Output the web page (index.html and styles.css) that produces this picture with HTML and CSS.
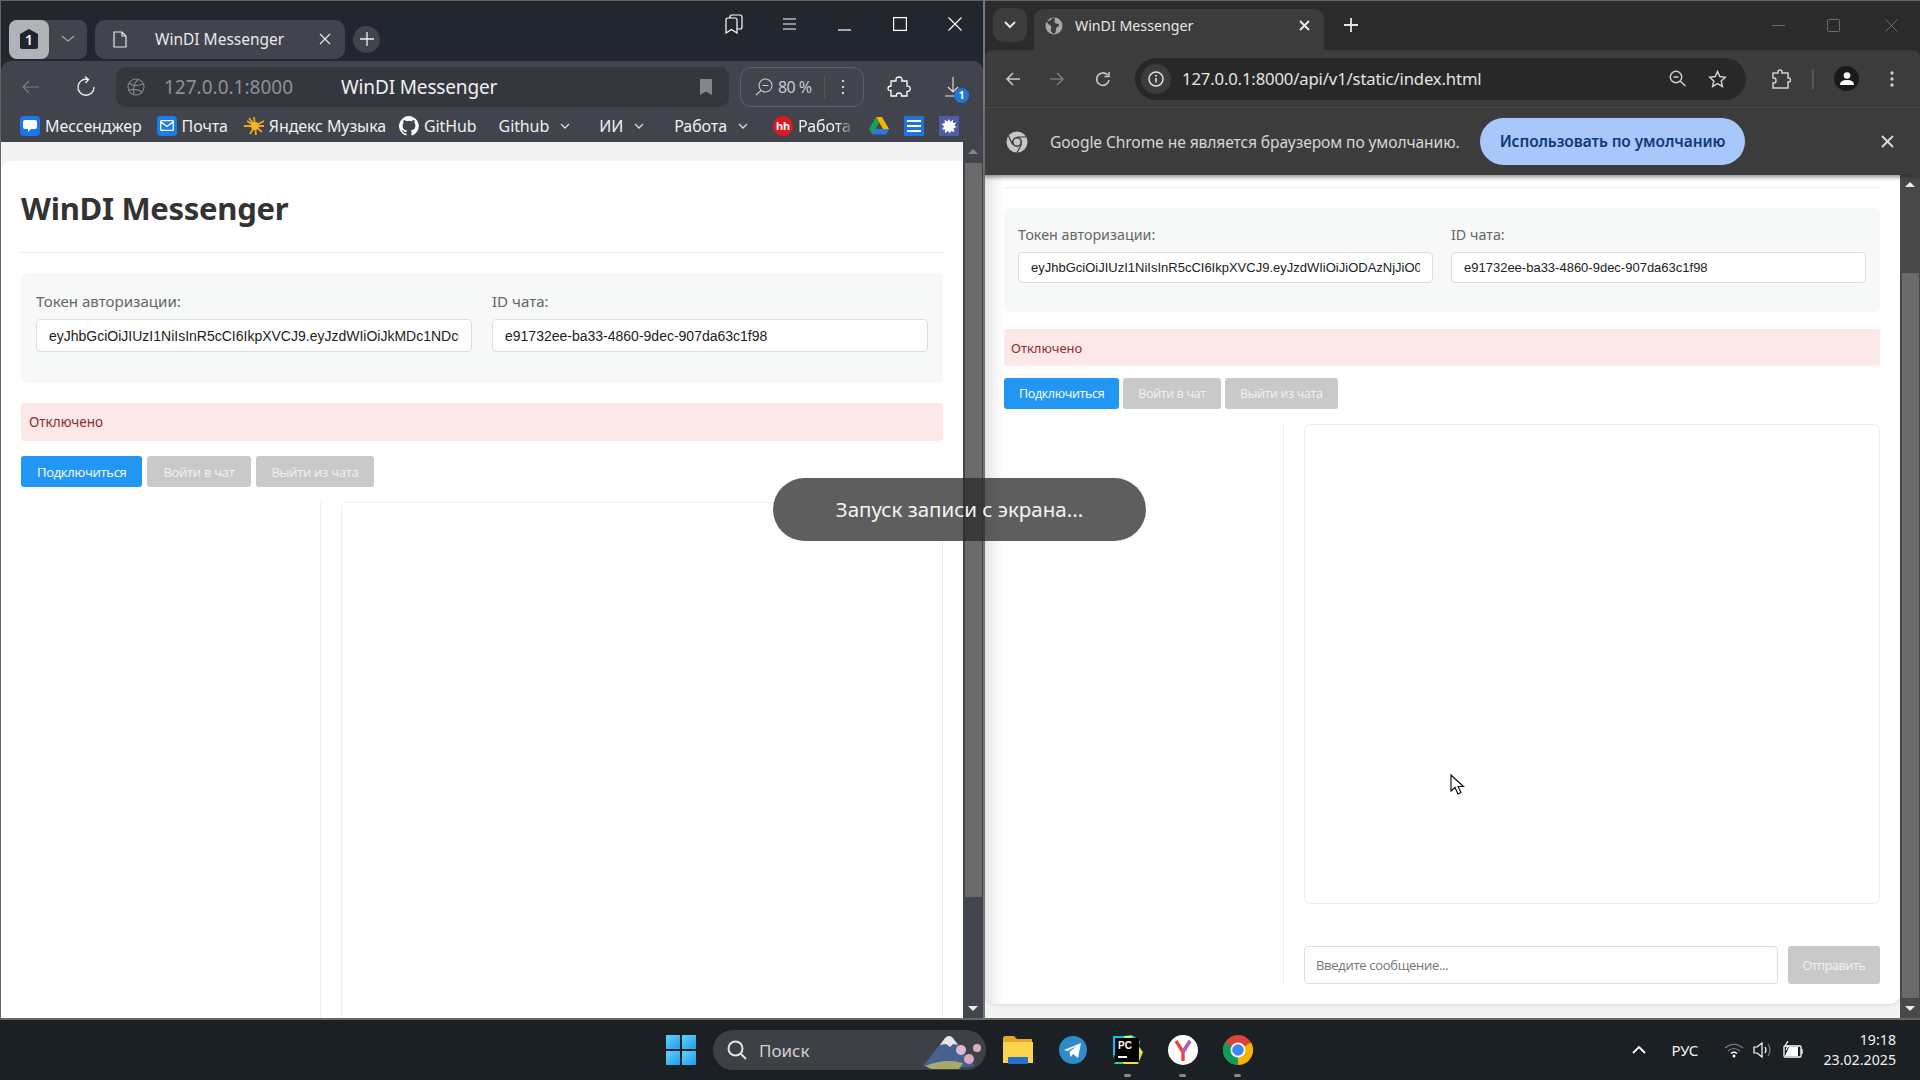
FILE: index.html
```html
<!DOCTYPE html>
<html lang="ru">
<head>
    <meta charset="UTF-8">
    <title>WinDI Messenger</title>
    <link rel="stylesheet" href="styles.css">
</head>
<body>
    <div class="desktop">
        <!-- left window: yandex -->
        <section class="win win-left">
            <div class="y-tabs">
                <div class="y-count"><span class="y-count-num"><svg class="y-hex" viewBox="0 0 22 22"><path d="M11 1l9 5v13a2 2 0 0 1-2 2H4a2 2 0 0 1-2-2V6z" fill="#20242c"/></svg><b>1</b></span><span class="y-count-arrow"><svg width="14" height="8" viewBox="0 0 14 8"><path d="M1 1l6 5 6-5" fill="none" stroke="#9a9ca3" stroke-width="1.5"/></svg></span></div>
                <div class="y-tab">
                    <svg width="14" height="17" viewBox="0 0 14 17"><path d="M1 1h8l4 4v11H1zM9 1v4h4" fill="none" stroke="#e8e8ea" stroke-width="1.2"/></svg>
                    <span class="y-tab-title">WinDI Messenger</span>
                    <svg width="12" height="12" viewBox="0 0 12 12"><path d="M1 1l10 10M11 1L1 11" stroke="#e8e8ea" stroke-width="1.2"/></svg>
                </div>
                <div class="y-new"><svg width="14" height="14" viewBox="0 0 14 14"><path d="M7 0v14M0 7h14" stroke="#f0f0f0" stroke-width="1.3"/></svg></div>
                <div class="y-sys">
                    <svg class="y-sys-book" width="18" height="20" viewBox="0 0 18 20"><path d="M1 6q0-2 2-2h7q2 0 2 2v13l-5.500-3.500L1 19zM5 4V3q0-2 2-2h8q2 0 2 2v10q0 2-2 2h-3" fill="none" stroke="#fff" stroke-width="1.200"/></svg>
                    <svg class="y-sys-menu" width="14" height="12" viewBox="0 0 14 12"><path d="M0 1h13M0 6h13M0 11h13" stroke="#fff" stroke-width="1.200"/></svg>
                    <svg class="y-sys-min" width="14" height="14" viewBox="0 0 14 14"><path d="M0 13h13" stroke="#fff" stroke-width="1.200"/></svg>
                    <svg class="y-sys-max" width="14" height="14" viewBox="0 0 14 14"><path d="M.6.6h12.800v12.800H.6z" fill="none" stroke="#fff" stroke-width="1.200"/></svg>
                    <svg class="y-sys-close" width="14" height="14" viewBox="0 0 14 14"><path d="M.5.5l13 13M13.500.5l-13 13" stroke="#fff" stroke-width="1.100"/></svg>
                </div>
            </div>
            <div class="y-panel">
                <div class="y-toolbar">
                    <svg class="y-back" width="18" height="14" viewBox="0 0 18 14"><path d="M17 7H1M7 1L1 7l6 6" fill="none" stroke="#7c7e85" stroke-width="1.200"/></svg>
                    <svg class="y-reload" width="20" height="21" viewBox="0 0 20 21"><path d="M12 3.500A8 8 0 1 0 18 11M9 .5l3.500 3L9.500 7" fill="none" stroke="#eee" stroke-width="1.300"/></svg>
                    <div class="y-address">
                        <svg width="18" height="18" viewBox="0 0 18 18"><g fill="none" stroke="#85878d" stroke-width="1.100"><circle cx="9" cy="9" r="8"/><path d="M2 5c4 3 9 3 14 1M1.500 12c5-1 10-1 13 2M11 1.500C7 5 6 11 7 16.500"/></g></svg>
                        <span class="y-host">127.0.0.1:8000</span>
                        <span class="y-title">WinDI Messenger</span>
                        <svg class="y-mark" width="14" height="18" viewBox="0 0 14 18"><path d="M1 2q0-1 1-1h10q1 0 1 1v15l-6-3.500L1 17z" fill="#84868c"/></svg>
                    </div>
                    <div class="y-zoom">
                        <svg width="18" height="18" viewBox="0 0 18 18"><g fill="none" stroke="#c9cacd" stroke-width="1.100"><circle cx="10.500" cy="7.500" r="6.500"/><path d="M7.500 7.500h6M6 12.500L1 17"/></g></svg>
                        <span class="y-zoom-val">80 %</span>
                        <span class="y-zoom-sep"></span>
                        <svg width="4" height="16" viewBox="0 0 4 16"><g fill="#d0d0d3"><circle cx="2" cy="2" r="1.200"/><circle cx="2" cy="8" r="1.200"/><circle cx="2" cy="14" r="1.200"/></g></svg>
                    </div>
                    <svg class="y-ext" width="24" height="22" viewBox="0 0 24 22"><path d="M9 4.500Q8.500 1 12 1t3 3.500L14.800 5H20v5.200q3-.7 3.200 2.300T20 15.500V20h-5.500q.5-3-2.500-3t-2.500 3H4v-5.500Q1 15 1 12.500T4 10V5h5z" fill="none" stroke="#fff" stroke-width="1.300"/></svg>
                    <div class="y-down">
                        <svg width="16" height="20" viewBox="0 0 16 20"><path d="M8 0v15M3 10l5 5 5-5M0 19h14" fill="none" stroke="#e8e8e8" stroke-width="1.100"/></svg>
                        <span class="y-badge">1</span>
                    </div>
                </div>
                <div class="y-marks">
                    <span class="bm"><i class="ic ic-msg"><svg width="14" height="12" viewBox="0 0 14 12"><path d="M2 0h10q2 0 2 2v5q0 2-2 2H8l-3 3V9H2Q0 9 0 7V2q0-2 2-2z" fill="#fff"/></svg></i>Мессенджер</span>
                    <span class="bm bm-mail"><i class="ic ic-mail"><svg width="14" height="11" viewBox="0 0 14 11"><path d="M1.500.7h11q.8 0 .8.8v8q0 .8-.8.8h-11q-.8 0-.8-.8v-8q0-.8.8-.8zM1 2l6 4.500L13 2" fill="none" stroke="#fff" stroke-width="1.300"/></svg></i>Почта</span>
                    <span class="bm bm-music"><svg class="ic-sun" width="22" height="20" viewBox="0 0 22 20"><path d="M12 10L21 5M12 10l-1-9M12 10L6 2M12 10l9 0M12 10l7 6M12 10l1 9M12 10l-5 8M12 10L1 10M12 10L4 5" stroke="#e6ac1e" stroke-width="1.800"/><circle cx="12" cy="10" r="4" fill="#f0b71f"/></svg>Яндекс Музыка</span>
                    <span class="bm bm-git"><svg width="20" height="20" viewBox="0 0 16 16"><path fill="#fff" d="M8 0a8 8 0 0 0-2.500 15.600c.4.100.5-.2.5-.4v-1.400c-2.200.5-2.700-1-2.700-1-.4-.9-.9-1.200-.9-1.200-.7-.5.100-.5.100-.5.800.1 1.200.8 1.200.8.700 1.200 1.900.9 2.300.7.100-.5.300-.9.500-1.100-1.800-.2-3.600-.9-3.600-4 0-.9.300-1.600.8-2.100-.1-.2-.4-1 .1-2.100 0 0 .7-.2 2.200.8a7.500 7.500 0 0 1 4 0c1.500-1 2.200-.8 2.200-.8.400 1.100.2 1.900.1 2.100.5.600.8 1.300.8 2.100 0 3.100-1.900 3.700-3.700 3.900.3.300.6.800.6 1.500v2.200c0 .2.100.5.600.4A8 8 0 0 0 8 0z"/></svg>GitHub</span>
                    <span class="bm bm-fold bm-f1">Github<svg class="chev" width="10" height="6" viewBox="0 0 10 6"><path d="M1 1l4 4 4-4" fill="none" stroke="#ddd" stroke-width="1.300"/></svg></span>
                    <span class="bm bm-fold bm-f2">ИИ<svg class="chev" width="10" height="6" viewBox="0 0 10 6"><path d="M1 1l4 4 4-4" fill="none" stroke="#ddd" stroke-width="1.300"/></svg></span>
                    <span class="bm bm-fold bm-f3">Работа<svg class="chev" width="10" height="6" viewBox="0 0 10 6"><path d="M1 1l4 4 4-4" fill="none" stroke="#ddd" stroke-width="1.300"/></svg></span>
                    <span class="bm bm-hh"><i class="ic ic-hh">hh</i><span class="bm-fade">Работа</span></span>
                    <svg class="bm-drive" width="20" height="18" viewBox="0 0 20 18"><path d="M7 0h6l7 12h-6z" fill="#f4b400"/><path d="M7 0l3 6-6.500 11.500L0 12z" fill="#1b9e55"/><path d="M6 12h14l-3 5.500H3z" fill="#2f78e0"/></svg>
                    <span class="bm-docs"><i></i><i></i><i></i></span>
                    <span class="bm-splash"><svg width="16" height="16" viewBox="0 0 16 16"><path d="M8 1l1.500 3L12 1.500l0 3.500 3-.5-1.500 3 2 1.500-3 1.500 1 3.500-3.500-1L9 15.500 7 13l-3 2 0-3.500-3 0 2-3L.5 6 4 5 3.500 2 6.500 3.500z" fill="#fff"/></svg></span>
                </div>
            </div>
            <div class="page-wrap">
                <div class="page page-left">
                    <h1 class="title">WinDI Messenger</h1>
                    <div class="form">
                        <div class="field">
                            <label>Токен авторизации:</label>
                            <input type="text" value="eyJhbGciOiJIUzI1NiIsInR5cCI6IkpXVCJ9.eyJzdWIiOiJkMDc1NDc0NGYtZmE2">
                        </div>
                        <div class="field">
                            <label>ID чата:</label>
                            <input type="text" value="e91732ee-ba33-4860-9dec-907da63c1f98">
                        </div>
                    </div>
                    <div class="status">Отключено</div>
                    <div class="buttons">
                        <button class="btn btn-on">Подключиться</button>
                        <button class="btn">Войти в чат</button>
                        <button class="btn">Выйти из чата</button>
                    </div>
                    <div class="chat">
                        <div class="side"></div>
                        <div class="main">
                            <div class="messages"></div>
                        </div>
                    </div>
                </div>
                <div class="sbar sbar-left">
                    <span class="sb-arrow sb-up"></span>
                    <span class="sb-thumb"></span>
                    <span class="sb-rest"></span>
                    <span class="sb-arrow sb-down"></span>
                </div>
            </div>
        </section>

        <!-- right window: chrome -->
        <section class="win win-right">
            <div class="c-tabs">
                <div class="c-list"><svg width="12" height="8" viewBox="0 0 12 8"><path d="M1 1l5 5 5-5" fill="none" stroke="#e6e6e6" stroke-width="2"/></svg></div>
                <div class="c-tab">
                    <svg width="18" height="18" viewBox="0 0 18 18"><circle cx="9" cy="9" r="8.500" fill="#a4a7ab"/><path d="M7 1c-1 3-3 3-5 3 0 3 2 3 3 4s2 1 1 4 2 4 3 5c2-2 2-3 2-5s3-2 3-4-3-1-4-2 0-3 0-4.500z" fill="#3c3c3c"/></svg>
                    <span class="c-tab-title">WinDI Messenger</span>
                    <svg width="11" height="11" viewBox="0 0 11 11"><path d="M1 1l9 9M10 1l-9 9" stroke="#eee" stroke-width="1.800"/></svg>
                </div>
                <svg class="c-new" width="14" height="14" viewBox="0 0 14 14"><path d="M7 0v14M0 7h14" stroke="#e6e6e6" stroke-width="1.800"/></svg>
                <div class="c-sys">
                    <svg width="13" height="13" viewBox="0 0 13 13"><path d="M0 6.500h13" stroke="#6c6c6c"/></svg>
                    <svg width="13" height="13" viewBox="0 0 13 13"><rect x=".5" y=".5" width="12" height="12" rx="1" fill="none" stroke="#6c6c6c"/></svg>
                    <svg class="c-sys-close" width="13" height="13" viewBox="0 0 13 13"><path d="M.5.5l12 12M12.500.5l-12 12" stroke="#6c6c6c"/></svg>
                </div>
            </div>
            <div class="c-toolbar">
                <svg class="c-back" width="16" height="14" viewBox="0 0 16 14"><path d="M15 7H2M8 1L2 7l6 6" fill="none" stroke="#c7c7c7" stroke-width="1.600"/></svg>
                <svg class="c-fwd" width="16" height="14" viewBox="0 0 16 14"><path d="M1 7h13M8 1l6 6-6 6" fill="none" stroke="#777" stroke-width="1.600"/></svg>
                <svg class="c-reload" width="16" height="16" viewBox="0 0 16 16"><path d="M14 9a6.200 6.200 0 1 1-1.500-5M14 1v4.500H9.500" fill="none" stroke="#c7c7c7" stroke-width="1.600"/></svg>
                <div class="c-address">
                    <span class="c-info"><svg width="16" height="16" viewBox="0 0 16 16"><circle cx="8" cy="8" r="7" fill="none" stroke="#e0e0e0" stroke-width="1.500"/><path d="M8 7v4.500" stroke="#e0e0e0" stroke-width="1.600"/><circle cx="8" cy="4.800" r="1" fill="#e0e0e0"/></svg></span>
                    <span class="c-url">127.0.0.1:8000/api/v1/static/index.html</span>
                    <svg class="c-lens" width="17" height="17" viewBox="0 0 17 17"><g fill="none" stroke="#cfcfcf" stroke-width="1.500"><circle cx="7" cy="7" r="5.700"/><path d="M4.500 7h5M11 11l5.500 5"/></g></svg>
                    <svg width="19" height="18" viewBox="0 0 19 18"><path d="M9.500 1.500l2.300 5.100 5.500.6-4.100 3.700 1.200 5.500-4.900-2.800-4.900 2.800 1.200-5.500L1.700 7.200l5.500-.6z" fill="none" stroke="#cfcfcf" stroke-width="1.500"/></svg>
                </div>
                <svg class="c-ext" width="20" height="20" viewBox="0 0 20 20"><path d="M2 4h5V3q0-2 2-2t2 2v1h6v5h1q1.500 0 1.500 2T18 13h-1v6H2v-5h1q2 0 2-2.500T3 9H2z" fill="none" stroke="#cfcfcf" stroke-width="1.500"/></svg>
                <span class="c-sep"></span>
                <span class="c-avatar"><svg width="14" height="13" viewBox="0 0 14 13"><circle cx="7" cy="3.500" r="3.300" fill="#fff"/><path d="M0 13q0-5 7-5t7 5z" fill="#fff"/></svg></span>
                <svg class="c-dots" width="4" height="16" viewBox="0 0 4 16"><g fill="#cfcfcf"><circle cx="2" cy="2" r="1.700"/><circle cx="2" cy="8" r="1.700"/><circle cx="2" cy="14" r="1.700"/></g></svg>
            </div>
            <div class="c-info-bar">
                <svg width="22" height="22" viewBox="0 0 22 22"><circle cx="11" cy="11" r="10.500" fill="#c7c7c7"/><circle cx="11" cy="11" r="5" fill="#3c3c3c"/><circle cx="11" cy="11" r="3.400" fill="#c7c7c7"/><path d="M11 6h9M6.500 13.500L2.500 5M15.500 13.500L11 21.500" stroke="#3c3c3c" stroke-width="1.200"/></svg>
                <span class="c-info-text">Google Chrome не является браузером по умолчанию.</span>
                <span class="c-default">Использовать по умолчанию</span>
                <svg class="c-info-x" width="13" height="13" viewBox="0 0 13 13"><path d="M1 1l11 11M12 1L1 12" stroke="#dcdcdc" stroke-width="1.800"/></svg>
            </div>
            <div class="page-wrap">
                <div class="page page-right">
                    <div class="scrolled-line"></div>
                    <div class="form">
                        <div class="field">
                            <label>Токен авторизации:</label>
                            <input type="text" value="eyJhbGciOiJIUzI1NiIsInR5cCI6IkpXVCJ9.eyJzdWIiOiJiODAzNjJiO0c5ZTktNDA">
                        </div>
                        <div class="field">
                            <label>ID чата:</label>
                            <input type="text" value="e91732ee-ba33-4860-9dec-907da63c1f98">
                        </div>
                    </div>
                    <div class="status">Отключено</div>
                    <div class="buttons">
                        <button class="btn btn-on">Подключиться</button>
                        <button class="btn">Войти в чат</button>
                        <button class="btn">Выйти из чата</button>
                    </div>
                    <div class="chat">
                        <div class="side"></div>
                        <div class="main">
                            <div class="messages"></div>
                            <div class="send-row">
                                <input class="msg-input" type="text" placeholder="Введите сообщение...">
                                <button class="btn btn-send">Отправить</button>
                            </div>
                        </div>
                    </div>
                </div>
                <div class="sbar sbar-right">
                    <span class="sb-arrow sb-up"></span>
                    <span class="sb-rest"></span>
                    <span class="sb-thumb"></span>
                    <span class="sb-arrow sb-down"></span>
                </div>
            </div>
        </section>

        <div class="toast">Запуск записи с экрана...</div>
        <svg class="cursor" width="16" height="22" viewBox="0 0 16 22"><path d="M1 1v16l4-3.500L8 20l3-1.500-3-6h5.500z" fill="#fff" stroke="#000" stroke-width="1.100"/></svg>
    </div>

    <footer class="taskbar">
        <div class="task-center">
            <span class="start"><i></i><i></i><i></i><i></i></span>
            <div class="search">
                <svg width="20" height="20" viewBox="0 0 20 20"><g fill="none" stroke="#e4e4e4" stroke-width="2"><circle cx="8.500" cy="8.500" r="7"/><path d="M13.500 13.500L19 19"/></g></svg>
                <span>Поиск</span>
                <svg class="fuji" width="58" height="38" viewBox="0 0 58 38"><path d="M0 34L22 6q4-4 8 0l14 18 8 10-24 3z" fill="#47618e"/><path d="M17 13l5-7q4-4 8 0l5 7-5-1-3 3-4-3z" fill="#e6e6ea"/><path d="M2 34q20-8 38-3l-4 6H8z" fill="#a9a96b"/><circle cx="38" cy="18" r="5" fill="#e2b8d4"/><circle cx="46" cy="27" r="5" fill="#d8a6c6"/><circle cx="54" cy="16" r="4" fill="#d5b0c8"/></svg>
            </div>
            <div class="apps">
                <span class="app"><svg width="32" height="30" viewBox="0 0 32 30"><path d="M1 3q0-2 2-2h9l3 3h15v24H1z" fill="#e3a724"/><path d="M1 7h30v21H1z" fill="#fbd44f"/><rect x="6" y="22" width="20" height="7" rx="1" fill="#2770c8"/></svg></span>
                <span class="app"><svg width="28" height="28" viewBox="0 0 28 28"><circle cx="14" cy="14" r="14" fill="#2f8ccb"/><path d="M5 14l17-7-3 15-5-4-2.500 3-1-5 7-6-9 5z" fill="#fff"/></svg></span>
                <span class="app app-run"><svg width="32" height="32" viewBox="0 0 32 32"><path d="M2 3l18-2 8 6-2 11z" fill="#21d789"/><path d="M1 2h18l12 16-5 12H8z" fill="#fcf84a" opacity=".9"/><path d="M1 2h12L1 24z" fill="#07c3f2"/><path d="M2 30l6-8 4 8z" fill="#21d789"/><rect x="3" y="4" width="24" height="24" fill="#000"/><text class="pc-text" x="6" y="15">PC</text><rect x="6" y="22" width="9" height="2" fill="#fff"/></svg></span>
                <span class="app app-run"><svg width="30" height="30" viewBox="0 0 30 30"><circle cx="15" cy="15" r="15" fill="#fff"/><path d="M8 6l7 11 7-11M15 17v9" fill="none" stroke="#f0423c" stroke-width="3.400"/><path d="M22 6l-7 11" stroke="#b35bc4" stroke-width="3.400"/></svg></span>
                <span class="app app-run"><svg width="30" height="30" viewBox="0 0 30 30"><circle cx="15" cy="15" r="15" fill="#db4437"/><path d="M15 15L2 7.500 A15 15 0 0 0 15 30z" fill="#0f9d58"/><path d="M15 15v15A15 15 0 0 0 28 7.500z" fill="#f4b400"/><circle cx="15" cy="15" r="7.500" fill="#fff"/><circle cx="15" cy="15" r="5.800" fill="#4285f4"/></svg></span>
            </div>
        </div>
        <div class="tray">
            <svg class="tray-up" width="14" height="8" viewBox="0 0 14 8"><path d="M1 7l6-6 6 6" fill="none" stroke="#fff" stroke-width="1.800"/></svg>
            <span class="tray-lang">РУС</span>
            <svg class="tray-ic" width="20" height="15" viewBox="0 0 20 15"><g fill="none" stroke="#7d8084" stroke-width="1.200"><path d="M1 5q9-7.500 18 0M4 8q6-5 12 0"/></g><path d="M7 10.500q3-2.500 6 0" fill="none" stroke="#fff" stroke-width="1.500"/><circle cx="10" cy="13" r="1.500" fill="#fff"/></svg>
            <svg class="tray-ic" width="20" height="18" viewBox="0 0 20 18"><path d="M1 6h3l5-4v14l-5-4H1z" fill="none" stroke="#fff" stroke-width="1.200"/><path d="M12 6q2 3 0 6" fill="none" stroke="#fff" stroke-width="1.200"/><path d="M15 3q4 6 0 12" fill="none" stroke="#7d8084" stroke-width="1.200"/></svg>
            <svg class="tray-ic" width="21" height="18" viewBox="0 0 21 18"><path d="M3 5h15q1 0 1 1v9q0 1-1 1H3q-1 0-1-1V6q0-1 1-1z" fill="none" stroke="#fff" stroke-width="1.300"/><path d="M3 15l4-9h9v9z" fill="#fff"/><path d="M20 8v5" stroke="#fff" stroke-width="1.300"/><path d="M6 0L3 5h3L4 9" fill="none" stroke="#fff" stroke-width="1.200"/></svg>
            <div class="clock"><span>19:18</span><span>23.02.2025</span></div>
        </div>
    </footer>
</body>
</html>
```

FILE: styles.css
```css
* {
    margin: 0;
    padding: 0;
    box-sizing: border-box;
}
html, body {
    width: 1920px;
    height: 1080px;
    overflow: hidden;
}
body {
    display: flex;
    flex-direction: column;
    background: #1b2025;
    font-family: "Noto Sans", "Open Sans", sans-serif;
}
svg {
    flex: none;
}

.desktop {
    position: relative;
    display: flex;
    height: 1020px;
    justify-content: space-between;
    background: #333;
}
.win {
    display: flex;
    flex-direction: column;
    height: 1020px;
}
.win-left {
    width: 985px;
    background: #22262f;
    border: 1px solid #666;
    border-bottom: 2px solid #666;
    border-right: 2px solid #777;
}
.win-right {
    width: 935px;
    background: #2b2b2b;
    border-top: 1px solid #666;
    border-bottom: 2px solid #666;
}

/* yandex chrome */
.y-tabs {
    display: flex;
    align-items: center;
    height: 60px;
    padding: 18px 0 2px 8px;
    color: #eee;
}
.y-count {
    display: flex;
    width: 78px;
    height: 39px;
    background: #41434d;
    border-radius: 8px;
}
.y-count-num {
    position: relative;
    display: flex;
    align-items: center;
    justify-content: center;
    width: 40px;
    background: #b2b3b6;
    border-radius: 8px;
}
.y-count-num b {
    position: absolute;
    font-size: 14px;
    font-weight: 600;
    color: #fff;
}
.y-hex {
    width: 22px;
    height: 22px;
}
.y-count-arrow {
    display: flex;
    align-items: center;
    justify-content: center;
    flex: 1;
}
.y-tab {
    display: flex;
    align-items: center;
    width: 250px;
    height: 39px;
    margin-left: 8px;
    padding: 0 14px 0 18px;
    background: #41434d;
    border-radius: 10px;
}
.y-tab-title {
    flex: 1;
    padding-left: 28px;
    font-size: 15.500px;
    color: #e8e8ea;
}
.y-new {
    display: flex;
    align-items: center;
    justify-content: center;
    width: 27px;
    height: 27px;
    margin-left: 8px;
    background: #41434d;
    border-radius: 50%;
}
.y-sys {
    display: flex;
    align-items: center;
    margin-left: auto;
    margin-top: -30px;
    padding-right: 21px;
}
.y-sys-menu { margin-left: 40px; }
.y-sys-min { margin-left: 41px; }
.y-sys-max { margin-left: 41px; }
.y-sys-close { margin-left: 41px; }

.y-panel {
    height: 81px;
    background: #41434d;
    border-radius: 10px 10px 0 0;
}
.y-toolbar {
    display: flex;
    align-items: center;
    height: 46px;
    padding: 5px 0 0 21px;
}
.y-reload {
    margin-left: 36px;
}
.y-address {
    display: flex;
    align-items: center;
    width: 613px;
    height: 40px;
    margin-left: 20px;
    padding: 0 16px 0 11px;
    background: #35373f;
    border-radius: 10px;
}
.y-host {
    margin-left: 9px;
    padding: 0 10px;
    color: #8e9096;
    font-size: 19px;
}
.y-title {
    flex: 1;
    margin-left: 38px;
    color: #f0f0f0;
    font-size: 19px;
    letter-spacing: -.15px;
}
.y-zoom {
    display: flex;
    align-items: center;
    width: 124px;
    height: 40px;
    margin-left: 11px;
    padding-left: 14px;
    border: 1px solid #5d5f68;
    border-radius: 11px;
    color: #c9cacd;
    font-size: 16px;
}
.y-zoom-val {
    margin-left: 5px;
    letter-spacing: -.6px;
}
.y-zoom-sep {
    width: 1px;
    height: 22px;
    margin: 0 16px 0 13px;
    background: #55575f;
}
.y-ext {
    margin-left: 23px;
}
.y-down {
    position: relative;
    display: flex;
    margin-left: 34px;
}
.y-badge {
    position: absolute;
    top: 11px;
    left: 9px;
    width: 15px;
    height: 15px;
    background: #1f78d1;
    border-radius: 50%;
    color: #fff;
    font-size: 10px;
    font-weight: 700;
    line-height: 15px;
    text-align: center;
}
.y-marks {
    display: flex;
    align-items: center;
    height: 35px;
    padding: 2px 0 0 19px;
    color: #f0f0f0;
    font-size: 16px;
    letter-spacing: -.1px;
}
.bm {
    display: flex;
    align-items: center;
    white-space: nowrap;
}
.ic {
    display: flex;
    align-items: center;
    justify-content: center;
    width: 20px;
    height: 20px;
    margin-right: 5px;
    border-radius: 4px;
    font-style: normal;
}
.ic-msg { background: #1b76f0; }
.ic-mail { background: #1a7de8; }
.ic-hh {
    background: #e3161f;
    border-radius: 50%;
    color: #fff;
    font-size: 11px;
    font-weight: 700;
}
.bm-mail { margin-left: 15px; }
.bm-music { margin-left: 15px; }
.ic-sun { margin-right: 4px; }
.bm-git { margin-left: 13px; }
.bm-git svg { margin-right: 5px; }
.bm-f1 { margin-left: 22px; }
.bm-f2 { margin-left: 29px; }
.bm-f3 { margin-left: 30px; }
.chev { margin-left: 11px; }
.bm-hh { margin-left: 25px; }
.bm-fade {
    width: 54px;
    overflow: hidden;
    -webkit-mask-image: linear-gradient(90deg, #000 72%, rgba(0,0,0,.15));
    mask-image: linear-gradient(90deg, #000 72%, rgba(0,0,0,.15));
}
.bm-drive { margin-left: 17px; }
.bm-docs {
    display: flex;
    flex-direction: column;
    justify-content: center;
    gap: 3px;
    width: 20px;
    height: 20px;
    margin-left: 15px;
    padding: 0 3px;
    background: #1f73dc;
}
.bm-docs i {
    height: 2px;
    background: #fff;
}
.bm-splash {
    display: flex;
    align-items: center;
    justify-content: center;
    width: 20px;
    height: 20px;
    margin-left: 15px;
    background: #4d5ea8;
}

/* page in both windows */
.page-wrap {
    display: flex;
    flex: 1;
    min-height: 0;
    background: #f3f3f3;
}
.page {
    flex: 1;
    min-width: 0;
    background: #fff;
}
.page-left {
    margin-top: 19px;
    padding: 0 20px;
    border-radius: 10px 0 0 0;
    overflow: hidden;
}
.page-right {
    margin-bottom: 14px;
    padding: 12px 20px 16px 19px;
    background: linear-gradient(90deg, #e6e6e6, #fff 18px);
    border-radius: 0 0 10px 10px;
    box-shadow: inset 0 7px 6px -6px rgba(0,0,0,.25), 0 1px 3px rgba(0,0,0,.12);
}
.scrolled-line {
    height: 1px;
    background: #eee;
    margin-bottom: 20px;
}

.title {
    height: 92px;
    padding-top: 25px;
    border-bottom: 1px solid #e8e8e8;
    color: #333;
    font-size: 31px;
    font-weight: 700;
    line-height: 44px;
    letter-spacing: -.3px;
}
.form {
    display: flex;
    gap: 20px;
    height: 110px;
    margin-top: 20px;
    padding: 15px;
    background: #f7f8f8;
    border-radius: 6px;
}
.page-right .form {
    gap: 18px;
    height: 104px;
    margin-top: 0;
    padding: 13px 14px;
}
.field {
    display: flex;
    flex-direction: column;
    flex: 1;
    min-width: 0;
}
.field label {
    height: 31px;
    color: #666;
    font-size: 15.100px;
    line-height: 26px;
}
.field input {
    height: 33px;
    padding: 0 12px;
    background: #fff;
    border: 1px solid #ddd;
    border-radius: 4px;
    color: #222;
    font-family: "Liberation Sans", Arial, sans-serif;
    font-size: 14px;
}
.page-right .field label {
    height: 31px;
    font-size: 14.300px;
    line-height: 27px;
}
.page-right .field input {
    height: 31px;
    font-size: 13px;
}
.status {
    height: 38px;
    margin-top: 20px;
    padding: 0 8px;
    background: #fce8e8;
    border-radius: 3px;
    color: #8f2d2d;
    font-size: 13.500px;
    line-height: 38px;
}
.page-right .status {
    height: 37px;
    margin-top: 17px;
    padding: 0 7px;
    font-size: 13px;
    line-height: 38px;
}
.buttons {
    display: flex;
    gap: 5px;
    margin-top: 15px;
}
.page-right .buttons {
    gap: 4px;
    margin-top: 12px;
}
.btn {
    height: 31px;
    padding: 0 16px;
    background: #c9c9c9;
    border: none;
    border-radius: 3px;
    color: #f1f1f1;
    font-family: "Open Sans", "Noto Sans", sans-serif;
    font-size: 13px;
    letter-spacing: -.3px;
}
.btn-on {
    background: #2196f3;
    color: #fff;
}
.page-right .btn {
    padding: 0 15px;
    font-size: 12.500px;
    letter-spacing: -.35px;
}
.chat {
    display: flex;
    height: 560px;
    margin-top: 15px;
}
.side {
    width: 300px;
    border-right: 1px solid #eee;
}
.page-right .side {
    width: 280px;
}
.main {
    display: flex;
    flex-direction: column;
    flex: 1;
    margin-left: 20px;
}
.messages {
    flex: 1;
    border: 1px solid #eee;
    border-radius: 6px;
}
.send-row {
    display: flex;
    gap: 10px;
    margin-top: 42px;
}
.msg-input {
    flex: 1;
    min-width: 0;
    height: 38px;
    padding: 0 11px;
    border: 1px solid #ddd;
    border-radius: 4px;
    font-family: "Open Sans", "Noto Sans", sans-serif;
    font-size: 13px;
    letter-spacing: -.3px;
}
.msg-input::placeholder {
    color: #757575;
}
.page-right .btn-send {
    width: 92px;
    height: 38px;
    padding: 0;
}

/* scrollbars */
.sbar {
    display: flex;
    flex-direction: column;
    width: 20px;
    background: #484848;
}
.sb-arrow {
    position: relative;
    height: 20px;
}
.sb-arrow::after {
    content: "";
    position: absolute;
    left: 5px;
    border: 5px solid transparent;
}
.sb-up::after {
    top: 2px;
    border-bottom-color: #eee;
}
.sb-down::after {
    top: 8px;
    border-top-color: #eee;
}
.sb-thumb {
    margin: 1px 1px 0 2px;
    background: #6b6b6b;
}
.sbar-left {
    background: #43454d;
}
.sbar-left .sb-up::after {
    border-bottom-color: #85878d;
}
.sbar-left .sb-thumb { height: 734px; }
.sbar-left .sb-rest { flex: 1; }
.sbar-right .sb-rest { height: 77px; }
.sbar-right .sb-thumb { flex: 1; }

/* chrome */
.c-tabs {
    display: flex;
    align-items: center;
    height: 49px;
    padding: 8px 0 0 8px;
    color: #e6e6e6;
}
.c-list {
    display: flex;
    align-items: center;
    justify-content: center;
    width: 34px;
    height: 34px;
    margin-bottom: 9px;
    background: #3c3c3c;
    border-radius: 10px;
}
.c-tab {
    display: flex;
    align-items: center;
    width: 290px;
    height: 41px;
    margin-left: 7px;
    padding: 0 14px 8px 11px;
    background: #3c3c3c;
    border-radius: 10px 10px 0 0;
}
.c-tab-title {
    flex: 1;
    padding-left: 12px;
    font-size: 14.200px;
}
.c-new {
    margin: 0 0 9px 20px;
}
.c-sys {
    display: flex;
    gap: 42px;
    margin: 0 22px 9px auto;
}
.c-sys-close {
    margin-left: 3px;
}
.c-toolbar {
    display: flex;
    align-items: center;
    height: 58px;
    padding: 0 0 0 20px;
    background: #3c3c3c;
    border-bottom: 1px solid #4a4a4a;
    border-radius: 8px 8px 0 0;
}
.c-fwd { margin-left: 28px; }
.c-reload { margin-left: 30px; }
.c-address {
    display: flex;
    align-items: center;
    width: 611px;
    height: 42px;
    margin-left: 24px;
    padding-right: 19px;
    background: #282828;
    border-radius: 21px;
}
.c-info {
    display: flex;
    align-items: center;
    justify-content: center;
    width: 30px;
    height: 30px;
    margin-left: 6px;
    background: #3c3c3c;
    border-radius: 50%;
}
.c-url {
    flex: 1;
    padding-left: 11px;
    color: #e4e4e4;
    font-size: 16.700px;
    letter-spacing: -.15px;
}
.c-lens {
    margin-right: 22px;
}
.c-ext {
    margin-left: 25px;
}
.c-sep {
    width: 2px;
    height: 20px;
    margin-left: 21px;
    background: #555;
}
.c-avatar {
    display: flex;
    align-items: center;
    justify-content: center;
    width: 25px;
    height: 25px;
    margin-left: 20px;
    overflow: hidden;
    background: #1a1a1a;
    border-radius: 50%;
}
.c-dots {
    margin-left: 31px;
}
.c-info-bar {
    position: relative;
    display: flex;
    align-items: center;
    height: 67px;
    padding: 0 26px 0 21px;
    background: #3c3c3c;
    box-shadow: 0 2px 4px rgba(0,0,0,.3);
}
.c-info-text {
    margin-left: 22px;
    color: #d6d6d6;
    font-size: 15.600px;
    letter-spacing: -.1px;
}
.c-default {
    height: 47px;
    margin-left: 20px;
    padding: 0 20px;
    background: #a8c7fa;
    border-radius: 24px;
    color: #0f3a78;
    font-size: 15.500px;
    font-weight: 600;
    line-height: 47px;
    letter-spacing: -.1px;
}
.c-info-x {
    margin-left: auto;
}

/* overlay */
.toast {
    position: absolute;
    left: 773px;
    top: 478px;
    width: 373px;
    height: 63px;
    background: rgba(40,40,40,.75);
    border-radius: 32px;
    color: #f4f4f4;
    font-size: 20.500px;
    line-height: 63px;
    text-align: center;
}
.cursor {
    position: absolute;
    left: 1450px;
    top: 774px;
}

/* windows taskbar */
.taskbar {
    position: relative;
    display: flex;
    align-items: center;
    justify-content: flex-end;
    height: 60px;
    background: #1b2025;
    color: #f0f0f0;
}
.task-center {
    position: absolute;
    left: 666px;
    display: flex;
    align-items: center;
}
.start {
    display: grid;
    grid-template-columns: 14px 14px;
    gap: 2px;
}
.start i {
    height: 14px;
    background: linear-gradient(135deg, #62d4f7, #1f9cf0);
}
.search {
    display: flex;
    align-items: center;
    width: 273px;
    height: 40px;
    margin-left: 17px;
    padding-left: 14px;
    background: #3d4146;
    border-radius: 20px;
    color: #d0d0d0;
    font-size: 17px;
}
.search span {
    flex: 1;
    margin-left: 12px;
}
.fuji {
    margin: 2px 5px 0 0;
}
.apps {
    display: flex;
    margin-left: 4px;
}
.app {
    position: relative;
    display: flex;
    align-items: center;
    justify-content: center;
    width: 55px;
    height: 60px;
}
.app-run::after {
    content: "";
    position: absolute;
    bottom: 3px;
    left: 24px;
    width: 7px;
    height: 3px;
    background: #888;
    border-radius: 2px;
}
.pc-text {
    fill: #fff;
    font-family: "Liberation Sans", sans-serif;
    font-size: 10px;
    font-weight: 700;
}
.tray {
    display: flex;
    align-items: center;
    padding-right: 24px;
}
.tray-lang {
    margin: 0 26px 0 25px;
    font-size: 15px;
}
.tray-ic {
    margin-right: 9px;
}
.clock {
    display: flex;
    flex-direction: column;
    align-items: flex-end;
    margin-left: 11px;
    font-size: 14.200px;
    line-height: 20px;
}
```
